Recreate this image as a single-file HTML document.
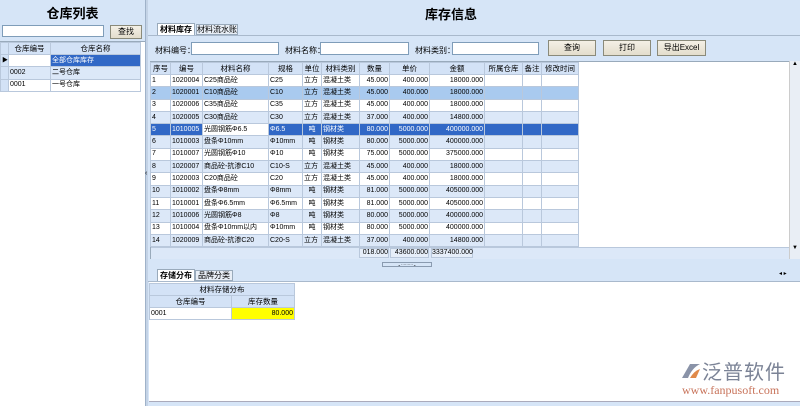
<!DOCTYPE html>
<html><head><meta charset="utf-8"><style>
*{margin:0;padding:0;box-sizing:border-box}
body{width:800px;height:406px;background:#d6e5f7;font-family:"Liberation Sans","Noto Sans CJK SC",sans-serif;font-size:8px;color:#000;position:relative;overflow:hidden}
.a{position:absolute}
table{border-collapse:collapse;table-layout:fixed;position:absolute}
td{border:1px solid #b9c8dc;height:12.3px;line-height:10px;padding:0 1px;white-space:nowrap;overflow:hidden;font-size:7px}
th{border:1px solid #b9c8dc;height:12px;font-weight:normal;background:#d3e2f6;font-size:7.5px;white-space:nowrap;overflow:hidden}
.r{text-align:right}.c{text-align:center}
tr.w td{background:#fff}tr.b td{background:#dce8f8}tr.h td{background:#a9caef}tr.s td{background:#3168c6;color:#fff}
input{position:absolute;height:13px;border:1px solid #7f9db9;background:#fff}
.btn{position:absolute;background:linear-gradient(#f4f0e6,#e3ddcc);border:1px solid #8a8a7a;text-align:center;line-height:14px;height:16px;font-size:8px}
</style></head><body>
<div class="a" style="left:0;top:0;width:146px;height:406px;background:#d6e5f7"></div>
<div class="a" style="left:0;top:3px;width:145px;text-align:center;font-size:13px;font-weight:bold">仓库列表</div>
<input style="left:2px;top:25px;width:102px;height:12px">
<div class="btn" style="left:110px;top:25px;width:32px;height:14px;line-height:12px">查找</div>
<div class="a" style="left:0;top:41px;width:146px;height:365px;background:#fff;border-top:1px solid #9ab"></div>
<table style="left:0;top:42px;width:140px">
<colgroup><col style="width:8px"><col style="width:42px"><col style="width:90px"></colgroup>
<tr><th></th><th>仓库编号</th><th>仓库名称</th></tr>
<tr class="w"><td style="background:#d3e2f6;font-size:6px">▶</td><td></td><td style="background:#3168c6;color:#fff">全部仓库库存</td></tr>
<tr class="b"><td style="background:#d3e2f6"></td><td>0002</td><td>二号仓库</td></tr>
<tr class="w"><td style="background:#d3e2f6"></td><td>0001</td><td>一号仓库</td></tr>
</table>
<div class="a" style="left:145px;top:0;width:3px;height:406px;background:#c4d3e6;border-left:1px solid #9fb2c9"></div>
<div class="a" style="left:145px;top:170px;font-size:7px">‹</div>
<div class="a" style="left:425px;top:4px;font-size:13px;font-weight:bold">库存信息</div>
<div class="a" style="left:148px;top:35px;width:652px;border-top:1px solid #a9b9cc"></div>
<div class="a" style="left:157px;top:23px;width:38px;height:12px;background:#fff;border:1px solid #9ab;border-bottom:none;font-weight:bold;font-size:8px;text-align:center;line-height:11px">材料库存</div>
<div class="a" style="left:196px;top:24px;width:42px;height:11px;background:#e8eef6;border:1px solid #9ab;text-align:center;line-height:10px">材料流水账</div>
<div class="a" style="left:155px;top:45px">材料编号：</div><input style="left:191px;top:42px;width:88px">
<div class="a" style="left:285px;top:45px">材料名称：</div><input style="left:320px;top:42px;width:89px">
<div class="a" style="left:415px;top:45px">材料类别：</div><input style="left:452px;top:42px;width:87px">
<div class="btn" style="left:548px;top:40px;width:48px">查询</div>
<div class="btn" style="left:603px;top:40px;width:48px">打印</div>
<div class="btn" style="left:657px;top:40px;width:49px">导出Excel</div>
<div class="a" style="left:150px;top:61px;width:640px;height:198px;background:#fff;border:1px solid #9ab"></div>
<div class="a" style="left:789px;top:61px;width:11px;height:198px;background:#e9eef5;border-left:1px solid #ccc"><div style="font-size:6px;text-align:center">▲</div><div style="font-size:6px;text-align:center;margin-top:178px">▼</div></div>
<table style="left:150px;top:62px;width:428px">
<colgroup><col style="width:20px"><col style="width:32px"><col style="width:66px"><col style="width:34px"><col style="width:19px"><col style="width:38px"><col style="width:30px"><col style="width:40px"><col style="width:55px"><col style="width:38px"><col style="width:19px"><col style="width:37px"></colgroup>
<tr><th>序号</th><th>编号</th><th>材料名称</th><th>规格</th><th>单位</th><th>材料类别</th><th>数量</th><th>单价</th><th>金额</th><th>所属仓库</th><th>备注</th><th>修改时间</th></tr>
<tr class="w"><td>1</td><td>1020004</td><td>C25商品砼</td><td>C25</td><td>立方</td><td>混凝土类</td><td class="r">45.000</td><td class="r">400.000</td><td class="r">18000.000</td><td></td><td></td><td></td></tr>
<tr class="h"><td>2</td><td>1020001</td><td>C10商品砼</td><td>C10</td><td>立方</td><td>混凝土类</td><td class="r">45.000</td><td class="r">400.000</td><td class="r">18000.000</td><td></td><td></td><td></td></tr>
<tr class="w"><td>3</td><td>1020006</td><td>C35商品砼</td><td>C35</td><td>立方</td><td>混凝土类</td><td class="r">45.000</td><td class="r">400.000</td><td class="r">18000.000</td><td></td><td></td><td></td></tr>
<tr class="b"><td>4</td><td>1020005</td><td>C30商品砼</td><td>C30</td><td>立方</td><td>混凝土类</td><td class="r">37.000</td><td class="r">400.000</td><td class="r">14800.000</td><td></td><td></td><td></td></tr>
<tr class="s"><td>5</td><td>1010005</td><td style="background:#fff;color:#000">光圆钢筋Φ6.5</td><td>Φ6.5</td><td class="c">吨</td><td>钢材类</td><td class="r">80.000</td><td class="r">5000.000</td><td class="r">400000.000</td><td></td><td></td><td></td></tr>
<tr class="b"><td>6</td><td>1010003</td><td>盘条Φ10mm</td><td>Φ10mm</td><td class="c">吨</td><td>钢材类</td><td class="r">80.000</td><td class="r">5000.000</td><td class="r">400000.000</td><td></td><td></td><td></td></tr>
<tr class="w"><td>7</td><td>1010007</td><td>光圆钢筋Φ10</td><td>Φ10</td><td class="c">吨</td><td>钢材类</td><td class="r">75.000</td><td class="r">5000.000</td><td class="r">375000.000</td><td></td><td></td><td></td></tr>
<tr class="b"><td>8</td><td>1020007</td><td>商品砼-抗渗C10</td><td>C10-S</td><td>立方</td><td>混凝土类</td><td class="r">45.000</td><td class="r">400.000</td><td class="r">18000.000</td><td></td><td></td><td></td></tr>
<tr class="w"><td>9</td><td>1020003</td><td>C20商品砼</td><td>C20</td><td>立方</td><td>混凝土类</td><td class="r">45.000</td><td class="r">400.000</td><td class="r">18000.000</td><td></td><td></td><td></td></tr>
<tr class="b"><td>10</td><td>1010002</td><td>盘条Φ8mm</td><td>Φ8mm</td><td class="c">吨</td><td>钢材类</td><td class="r">81.000</td><td class="r">5000.000</td><td class="r">405000.000</td><td></td><td></td><td></td></tr>
<tr class="w"><td>11</td><td>1010001</td><td>盘条Φ6.5mm</td><td>Φ6.5mm</td><td class="c">吨</td><td>钢材类</td><td class="r">81.000</td><td class="r">5000.000</td><td class="r">405000.000</td><td></td><td></td><td></td></tr>
<tr class="b"><td>12</td><td>1010006</td><td>光圆钢筋Φ8</td><td>Φ8</td><td class="c">吨</td><td>钢材类</td><td class="r">80.000</td><td class="r">5000.000</td><td class="r">400000.000</td><td></td><td></td><td></td></tr>
<tr class="w"><td>13</td><td>1010004</td><td>盘条Φ10mm以内</td><td>Φ10mm</td><td class="c">吨</td><td>钢材类</td><td class="r">80.000</td><td class="r">5000.000</td><td class="r">400000.000</td><td></td><td></td><td></td></tr>
<tr class="b"><td>14</td><td>1020009</td><td>商品砼-抗渗C20</td><td>C20-S</td><td>立方</td><td>混凝土类</td><td class="r">37.000</td><td class="r">400.000</td><td class="r">14800.000</td><td></td><td></td><td></td></tr>
</table>
<div class="a" style="left:151px;top:247px;width:638px;height:12px;background:#dce8f8;border-top:1px solid #b9c8dc"></div>
<div class="a" style="left:359px;top:248px;width:30px;height:10px;border:1px solid #b9c8dc;background:#e6eef9;text-align:right;font-size:7px">018.000</div>
<div class="a" style="left:390px;top:248px;width:39px;height:10px;border:1px solid #b9c8dc;background:#e6eef9;text-align:right;font-size:7px">43600.000</div>
<div class="a" style="left:431px;top:248px;width:42px;height:10px;border:1px solid #b9c8dc;background:#e6eef9;text-align:right;font-size:7px">3337400.000</div>
<div class="a" style="left:382px;top:262px;width:50px;height:5px;border:1px solid #8a9bb0;font-size:4px;line-height:3px;text-align:center">⌄·········⌄</div>
<div class="a" style="left:148px;top:281px;width:652px;border-top:1px solid #a9b9cc"></div>
<div class="a" style="left:157px;top:269px;width:38px;height:12px;background:#fff;border:1px solid #9ab;border-bottom:none;font-weight:bold;text-align:center;line-height:11px">存储分布</div>
<div class="a" style="left:195px;top:270px;width:38px;height:11px;background:#e8eef6;border:1px solid #9ab;text-align:center;line-height:10px">品牌分类</div>
<div class="a" style="left:779px;top:270px;font-size:6px">◂ ▸</div>
<div class="a" style="left:149px;top:282px;width:651px;height:120px;background:#fff;border-bottom:1px solid #aab"></div>
<table style="left:149px;top:283px;width:145px">
<colgroup><col style="width:82px"><col style="width:63px"></colgroup>
<tr><th colspan="2" style="height:11px">材料存储分布</th></tr>
<tr><th style="height:11px">仓库编号</th><th>库存数量</th></tr>
<tr class="w"><td>0001</td><td class="r" style="background:#ffff00">80.000</td></tr>
</table>
<svg class="a" style="left:680px;top:362px" width="22" height="18" viewBox="0 0 22 18"><path d="M2 16 L10 2 L20 2 Q12 6 8 16Z" fill="#8a93a8"/><path d="M10 16 Q14 9 20 7 L16 16Z" fill="#e08a4a"/></svg>
<div class="a" style="left:702px;top:359px;font-size:20px;color:#7b8396;letter-spacing:1px;font-family:'Noto Sans CJK SC',sans-serif;line-height:24px">泛普软件</div>
<div class="a" style="left:682px;top:383px;font-size:12px;color:#c8735a;font-family:'Liberation Serif',serif">www.fanpusoft.com</div>
</body></html>
